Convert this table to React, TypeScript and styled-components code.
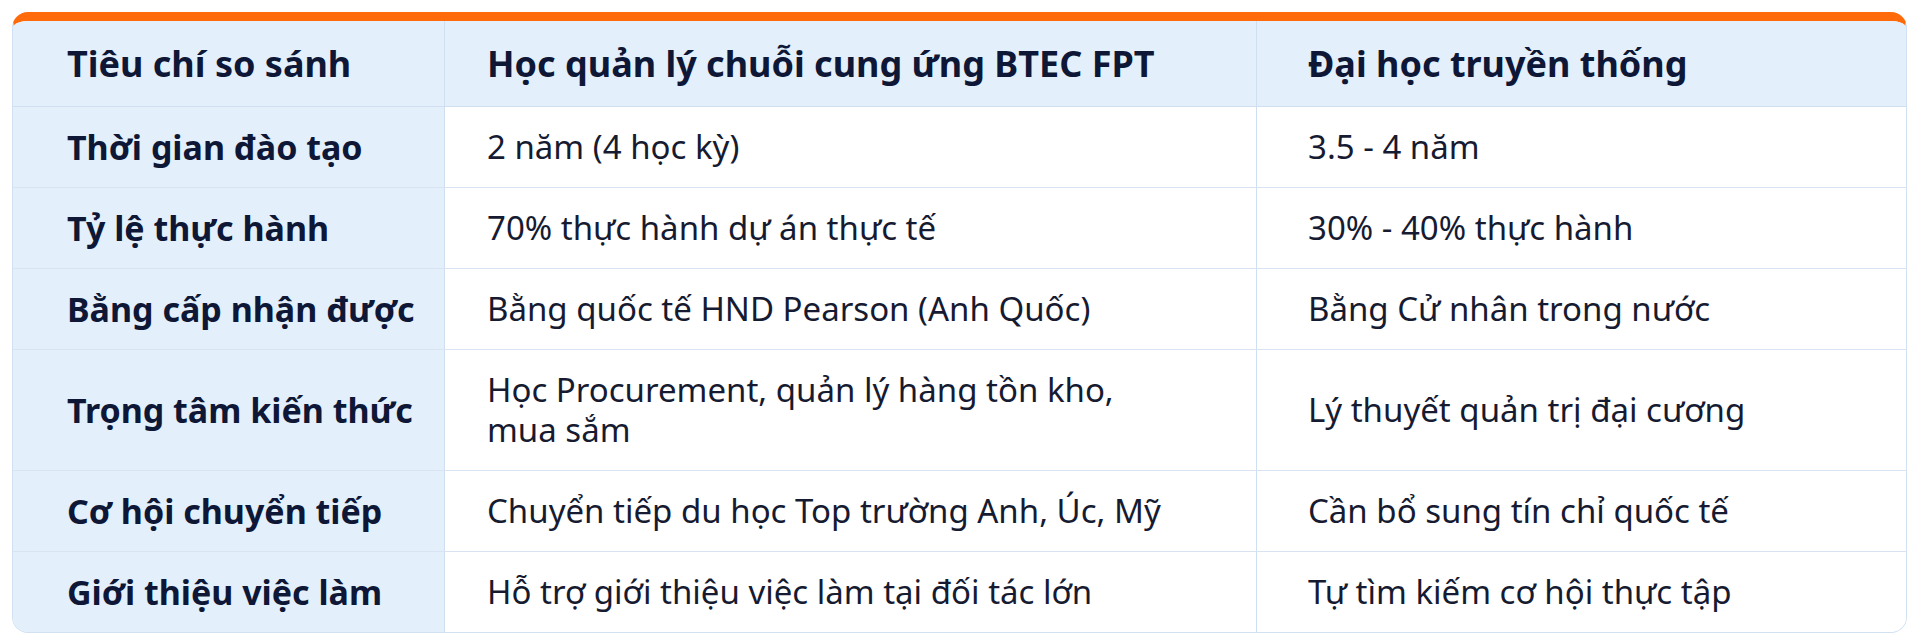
import { createGlobalStyle, styled } from 'styled-components';

const rows: [string, string, string][] = [
  ['Thời gian đào tạo', '2 năm (4 học kỳ)', '3.5 - 4 năm'],
  ['Tỷ lệ thực hành', '70% thực hành dự án thực tế', '30% - 40% thực hành'],
  ['Bằng cấp nhận được', 'Bằng quốc tế HND Pearson (Anh Quốc)', 'Bằng Cử nhân trong nước'],
  ['Trọng tâm kiến thức', 'Học Procurement, quản lý hàng tồn kho, mua sắm', 'Lý thuyết quản trị đại cương'],
  ['Cơ hội chuyển tiếp', 'Chuyển tiếp du học Top trường Anh, Úc, Mỹ', 'Cần bổ sung tín chỉ quốc tế'],
  ['Giới thiệu việc làm', 'Hỗ trợ giới thiệu việc làm tại đối tác lớn', 'Tự tìm kiếm cơ hội thực tập'],
];

const headers = ['Tiêu chí so sánh', 'Học quản lý chuỗi cung ứng BTEC FPT', 'Đại học truyền thống'];

// left padding per column, matched to the text starts
const pads = [54, 42, 51];

const App = () => {
  return (
    <>
      <GlobalStyle />
      <StCard>
        <StGrid>
          {headers.map((h, i) => (
            <StHeadCell key={h} $pad={pads[i]} $last={i === 2}>
              {h}
            </StHeadCell>
          ))}
          {rows.map((row, r) =>
            row.map((text, c) =>
              c === 0 ? (
                <StLabelCell key={`${r}-${c}`} $pad={pads[c]} $bottom={r === rows.length - 1}>
                  {text}
                </StLabelCell>
              ) : (
                <StCell key={`${r}-${c}`} $pad={pads[c]} $last={c === 2} $bottom={r === rows.length - 1}>
                  <StCellText $narrow={c === 1 && r === 3}>{text}</StCellText>
                </StCell>
              ),
            ),
          )}
        </StGrid>
      </StCard>
    </>
  );
};

const GlobalStyle = createGlobalStyle`
  body {
    margin: 0;
    padding: 12px 13px 0 12px;
    background: #ffffff;
    font-family: 'Noto Sans', 'Open Sans', sans-serif;
  }
`;

const StCard = styled.div`
  border: 1px solid #d2e1f1;
  border-top: 9px solid #ff6a0a;
  border-radius: 16px;
  overflow: hidden;
  background: #ffffff;
`;

const StGrid = styled.div`
  display: grid;
  grid-template-columns: 432px 812px 1fr;
`;

const StHeadCell = styled.div<{ $pad: number; $last?: boolean }>`
  background: #e3effb;
  padding: 20px 16px 20px ${(p) => p.$pad}px;
  border-right: ${(p) => (p.$last ? 'none' : '1px solid #d0dfef')};
  border-bottom: 1px solid #d0dfef;

  font-size: 36px;
  line-height: 45px;
  font-weight: 700;
  color: #0e1736;
  white-space: nowrap;
`;

const StCell = styled.div<{ $pad: number; $last?: boolean; $bottom?: boolean }>`
  background: #ffffff;
  padding: 20px 16px 20px ${(p) => p.$pad}px;
  border-right: ${(p) => (p.$last ? 'none' : '1px solid #d0dfef')};
  border-bottom: ${(p) => (p.$bottom ? 'none' : '1px solid #d8e4f2')};
  display: flex;
  align-items: center;

  font-size: 33px;
  line-height: 40px;
  color: #161b31;
`;

const StCellText = styled.span<{ $narrow?: boolean }>`
  max-width: ${(p) => (p.$narrow ? '640px' : 'none')};
`;

const StLabelCell = styled(StCell)`
  background: #e3effb;
  font-size: 34px;
  font-weight: 700;
  color: #0e1736;
  white-space: nowrap;
`;

export default App;
